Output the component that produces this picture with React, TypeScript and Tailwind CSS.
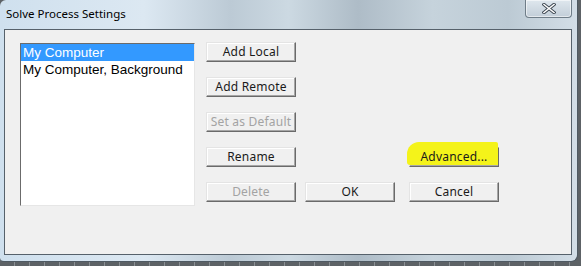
import { ReactNode } from 'react';

interface WinButtonProps {
  label: string;
  disabled?: boolean;
  highlight?: boolean;
  className?: string;
}

function WinButton({ label, disabled, highlight, className = '' }: WinButtonProps) {
  return (
    <div
      className={`relative h-[20px] w-[90px] flex items-center justify-center bg-[#f0f0f0] border border-t-[#e4e4e4] border-l-[#e4e4e4] border-r-[#6a6a6a] border-b-[#6a6a6a] shadow-[inset_-1px_-1px_0_#a6a6a6,inset_1px_1px_0_#ffffff] ${className}`}
    >
      {/* marker scribble drawn over the button */}
      {highlight && (
        <span className="absolute -top-[6px] -left-[3px] right-[0px] bottom-[1px] bg-[#f4f31a] rounded-tl-[12px] rounded-tr-[2px] rounded-bl-[3px]" />
      )}
      <span
        className={`relative text-[12px] leading-none tracking-[0.2px] ${disabled ? 'text-[#a3a3a3]' : 'text-[#1a1a1a]'}`}
        style={{ fontFamily: 'Tahoma, "Noto Sans", sans-serif' }}
      >
        {label}
      </span>
    </div>
  );
}

function ListItem({ children, selected }: { children: ReactNode; selected?: boolean }) {
  return (
    <div
      className={`h-[17px] pl-[2px] text-[13.5px] leading-[17px] whitespace-nowrap ${selected ? 'bg-[#3399ff] text-white' : 'text-black'}`}
    >
      {children}
    </div>
  );
}

export default function App() {
  return (
    <div className="w-[581px] h-[266px] overflow-hidden bg-[#5d6266] bg-[repeating-linear-gradient(90deg,#5d6266_0px,#5d6266_14px,#8a8f93_14px,#8a8f93_15px)]">
      {/* Window frame */}
      <div className="w-[578px] h-[262px] flex flex-col rounded-tl-[6px] rounded-br-[7px] rounded-bl-[4px] border-r border-b border-[#4f5a63] bg-[linear-gradient(90deg,#cfe0ee_0%,#dce8f2_25%,#bccad5_40%,#ccd9e2_50%,#aebcc7_62%,#c6d3dc_75%,#bccad4_88%,#d3dee7_100%)]">
        {/* Title bar */}
        <div className="h-[29px] flex items-start justify-between">
          <div
            className="pl-[6px] pt-[6px] text-[11.5px] leading-[16px] text-black"
            style={{ fontFamily: '"Segoe UI", "Noto Sans", sans-serif' }}
          >
            Solve Process Settings
          </div>
          <div className="mr-[5px] w-[47px] h-[18px] flex items-center justify-center rounded-b-[4px] border border-t-0 border-[#6f7d88] bg-[linear-gradient(180deg,#dfe7ee,#c2ced8)] shadow-[inset_0_0_0_1px_rgba(255,255,255,0.55)]">
            <svg width="14" height="11" viewBox="0 0 14 11">
              <path
                d="M2 1.5 L12 9.5 M12 1.5 L2 9.5"
                stroke="#3c4650"
                strokeWidth="3.4"
                strokeLinecap="square"
              />
              <path
                d="M2 1.5 L12 9.5 M12 1.5 L2 9.5"
                stroke="#ffffff"
                strokeWidth="1.6"
                strokeLinecap="square"
              />
            </svg>
          </div>
        </div>

        {/* Client area */}
        <div className="ml-[4px] mr-[5px] h-[226px] border border-[#56616b] bg-[#f0f0f0] flex pl-[15px] pt-[12px]">
          <div
            className="mt-[1px] w-[175px] h-[163px] bg-white border border-t-[#6b6b6b] border-l-[#6b6b6b] border-r-[#e6e6e6] border-b-[#e6e6e6]"
            style={{ fontFamily: '"Liberation Sans", Arial, sans-serif' }}
          >
            <ListItem selected>My Computer</ListItem>
            <ListItem>My Computer, Background</ListItem>
          </div>

          <div className="ml-[11px] grid grid-cols-[99px_104px_90px] grid-rows-[20px_20px_20px_20px_20px] gap-y-[15px]">
            <WinButton label="Add Local" className="col-start-1 row-start-1" />
            <WinButton label="Add Remote" className="col-start-1 row-start-2" />
            <WinButton label="Set as Default" disabled className="col-start-1 row-start-3" />
            <WinButton label="Rename" className="col-start-1 row-start-4" />
            <WinButton label="Advanced..." highlight className="col-start-3 row-start-4" />
            <WinButton label="Delete" disabled className="col-start-1 row-start-5" />
            <WinButton label="OK" className="col-start-2 row-start-5" />
            <WinButton label="Cancel" className="col-start-3 row-start-5" />
          </div>
        </div>
      </div>
    </div>
  );
}
